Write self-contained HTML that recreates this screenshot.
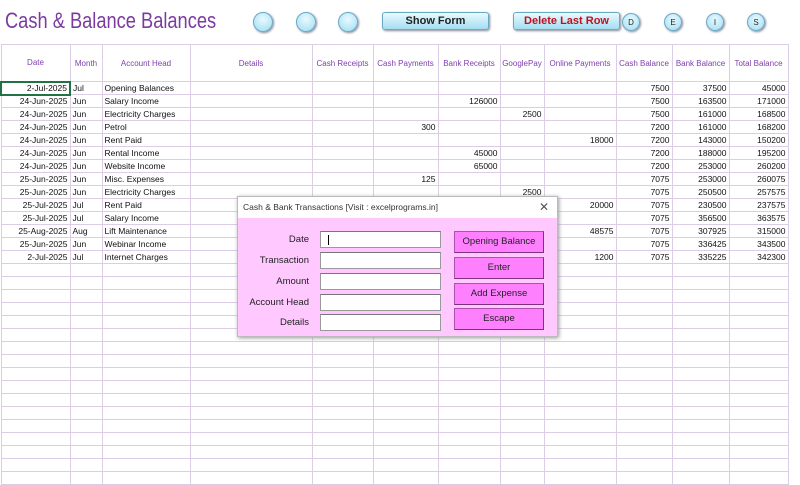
<!DOCTYPE html>
<html><head><meta charset="utf-8"><style>
*{margin:0;padding:0;box-sizing:border-box}
body{width:800px;height:450px;overflow:hidden;background:#fff;font-family:"Liberation Sans",sans-serif;position:relative}
.title{position:absolute;left:5px;top:8px;font-size:22px;color:#7b3aa0;transform:scaleX(0.83);transform-origin:0 0;white-space:nowrap}
.circ{position:absolute;border-radius:50%;background:radial-gradient(circle at 50% 35%,#e8faff,#9fdcf2);border:1px solid #6aa9c4;box-shadow:1px 1px 2px #889}
.cl{font-size:8px;color:#222;text-align:center;line-height:17px;width:18px;height:18px}
.btn{position:absolute;height:18px;border:1px solid #6aa9c4;border-radius:3px;background:linear-gradient(#e8faff,#a5def2);font-size:11px;text-align:center;line-height:16px;font-weight:bold;box-shadow:1px 1px 2px #889}
table{position:absolute;left:0;top:44px;width:787px;border-collapse:collapse;table-layout:fixed;font-size:8.5px}
td{border:1px solid #dccde6;height:13px;padding:0 2px;white-space:nowrap;overflow:hidden;text-align:right;color:#111;line-height:11px}
tr.h td{height:37px;text-align:center;color:#8040b0;font-size:8px;padding:0}
td.l{text-align:left}
.dlg{position:absolute;left:237px;top:196px;width:321px;height:141px;background:#ffc8ff;border:1px solid #bbb;box-shadow:1px 1px 4px #999}
.tb{height:21px;background:#fff;font-size:8.5px;color:#333;line-height:21px;padding-left:5px}
.x{position:absolute;right:8px;top:0;font-size:12px;color:#555}
.lab{position:absolute;right:248px;font-size:9.5px;color:#222;width:80px;text-align:right}
.inp{position:absolute;left:82px;width:121px;height:17px;background:#fff;border:1px solid #999;border-top-color:#777}
.pb{position:absolute;left:216px;width:90px;height:22px;background:#ff80ff;border:1px solid #b050b0;border-right-color:#803080;border-bottom-color:#803080;font-size:9.5px;color:#222;text-align:center;line-height:20px}
</style></head><body>
<div class="title">Cash &amp; Balance Balances</div>
<div class="circ" style="left:253px;top:12px;width:20px;height:20px"></div>
<div class="circ" style="left:296px;top:12px;width:20px;height:20px"></div>
<div class="circ" style="left:338px;top:12px;width:20px;height:20px"></div>
<div class="btn" style="left:382px;top:12px;width:107px;color:#222">Show Form</div>
<div class="btn" style="left:513px;top:12px;width:107px;color:#c01020">Delete Last Row</div>
<div class="circ cl" style="left:622px;top:13px">D</div>
<div class="circ cl" style="left:664px;top:13px">E</div>
<div class="circ cl" style="left:706px;top:13px">I</div>
<div class="circ cl" style="left:747px;top:13px">S</div>
<table>
<colgroup><col style="width:69px"><col style="width:32px"><col style="width:88px"><col style="width:122px"><col style="width:61px"><col style="width:65px"><col style="width:62px"><col style="width:44px"><col style="width:72px"><col style="width:56px"><col style="width:57px"><col style="width:59px"></colgroup>
<tr class="h"><td>Date</td><td>Month</td><td>Account Head</td><td>Details</td><td>Cash Receipts</td><td>Cash Payments</td><td>Bank Receipts</td><td>GooglePay</td><td>Online Payments</td><td>Cash Balance</td><td>Bank Balance</td><td>Total Balance</td></tr>
<tr><td style="border:2px solid #217346">2-Jul-2025</td><td class="l">Jul</td><td class="l">Opening Balances</td><td></td><td></td><td></td><td></td><td></td><td></td><td>7500</td><td>37500</td><td>45000</td></tr>
<tr><td>24-Jun-2025</td><td class="l">Jun</td><td class="l">Salary Income</td><td></td><td></td><td></td><td>126000</td><td></td><td></td><td>7500</td><td>163500</td><td>171000</td></tr>
<tr><td>24-Jun-2025</td><td class="l">Jun</td><td class="l">Electricity Charges</td><td></td><td></td><td></td><td></td><td>2500</td><td></td><td>7500</td><td>161000</td><td>168500</td></tr>
<tr><td>24-Jun-2025</td><td class="l">Jun</td><td class="l">Petrol</td><td></td><td></td><td>300</td><td></td><td></td><td></td><td>7200</td><td>161000</td><td>168200</td></tr>
<tr><td>24-Jun-2025</td><td class="l">Jun</td><td class="l">Rent Paid</td><td></td><td></td><td></td><td></td><td></td><td>18000</td><td>7200</td><td>143000</td><td>150200</td></tr>
<tr><td>24-Jun-2025</td><td class="l">Jun</td><td class="l">Rental Income</td><td></td><td></td><td></td><td>45000</td><td></td><td></td><td>7200</td><td>188000</td><td>195200</td></tr>
<tr><td>24-Jun-2025</td><td class="l">Jun</td><td class="l">Website Income</td><td></td><td></td><td></td><td>65000</td><td></td><td></td><td>7200</td><td>253000</td><td>260200</td></tr>
<tr><td>25-Jun-2025</td><td class="l">Jun</td><td class="l">Misc. Expenses</td><td></td><td></td><td>125</td><td></td><td></td><td></td><td>7075</td><td>253000</td><td>260075</td></tr>
<tr><td>25-Jun-2025</td><td class="l">Jun</td><td class="l">Electricity Charges</td><td></td><td></td><td></td><td></td><td>2500</td><td></td><td>7075</td><td>250500</td><td>257575</td></tr>
<tr><td>25-Jul-2025</td><td class="l">Jul</td><td class="l">Rent Paid</td><td></td><td></td><td></td><td></td><td></td><td>20000</td><td>7075</td><td>230500</td><td>237575</td></tr>
<tr><td>25-Jul-2025</td><td class="l">Jul</td><td class="l">Salary Income</td><td></td><td></td><td></td><td></td><td></td><td></td><td>7075</td><td>356500</td><td>363575</td></tr>
<tr><td>25-Aug-2025</td><td class="l">Aug</td><td class="l">Lift Maintenance</td><td></td><td></td><td></td><td></td><td></td><td>48575</td><td>7075</td><td>307925</td><td>315000</td></tr>
<tr><td>25-Jun-2025</td><td class="l">Jun</td><td class="l">Webinar Income</td><td></td><td></td><td></td><td></td><td></td><td></td><td>7075</td><td>336425</td><td>343500</td></tr>
<tr><td>2-Jul-2025</td><td class="l">Jul</td><td class="l">Internet Charges</td><td></td><td></td><td></td><td></td><td></td><td>1200</td><td>7075</td><td>335225</td><td>342300</td></tr>
<tr><td></td><td></td><td></td><td></td><td></td><td></td><td></td><td></td><td></td><td></td><td></td><td></td></tr>
<tr><td></td><td></td><td></td><td></td><td></td><td></td><td></td><td></td><td></td><td></td><td></td><td></td></tr>
<tr><td></td><td></td><td></td><td></td><td></td><td></td><td></td><td></td><td></td><td></td><td></td><td></td></tr>
<tr><td></td><td></td><td></td><td></td><td></td><td></td><td></td><td></td><td></td><td></td><td></td><td></td></tr>
<tr><td></td><td></td><td></td><td></td><td></td><td></td><td></td><td></td><td></td><td></td><td></td><td></td></tr>
<tr><td></td><td></td><td></td><td></td><td></td><td></td><td></td><td></td><td></td><td></td><td></td><td></td></tr>
<tr><td></td><td></td><td></td><td></td><td></td><td></td><td></td><td></td><td></td><td></td><td></td><td></td></tr>
<tr><td></td><td></td><td></td><td></td><td></td><td></td><td></td><td></td><td></td><td></td><td></td><td></td></tr>
<tr><td></td><td></td><td></td><td></td><td></td><td></td><td></td><td></td><td></td><td></td><td></td><td></td></tr>
<tr><td></td><td></td><td></td><td></td><td></td><td></td><td></td><td></td><td></td><td></td><td></td><td></td></tr>
<tr><td></td><td></td><td></td><td></td><td></td><td></td><td></td><td></td><td></td><td></td><td></td><td></td></tr>
<tr><td></td><td></td><td></td><td></td><td></td><td></td><td></td><td></td><td></td><td></td><td></td><td></td></tr>
<tr><td></td><td></td><td></td><td></td><td></td><td></td><td></td><td></td><td></td><td></td><td></td><td></td></tr>
<tr><td></td><td></td><td></td><td></td><td></td><td></td><td></td><td></td><td></td><td></td><td></td><td></td></tr>
<tr><td></td><td></td><td></td><td></td><td></td><td></td><td></td><td></td><td></td><td></td><td></td><td></td></tr>
<tr><td></td><td></td><td></td><td></td><td></td><td></td><td></td><td></td><td></td><td></td><td></td><td></td></tr>
<tr><td></td><td></td><td></td><td></td><td></td><td></td><td></td><td></td><td></td><td></td><td></td><td></td></tr>
</table>
<div class="dlg">
<div class="tb">Cash &amp; Bank Transactions [Visit : excelprograms.in]<span class="x">✕</span></div>
<div class="lab" style="top:37px">Date</div><div class="inp" style="top:34px"><span style="position:absolute;left:7px;top:3px;width:1px;height:10px;background:#000"></span></div>
<div class="lab" style="top:58px">Transaction</div><div class="inp" style="top:55px"></div>
<div class="lab" style="top:79px">Amount</div><div class="inp" style="top:76px"></div>
<div class="lab" style="top:100px">Account Head</div><div class="inp" style="top:97px"></div>
<div class="lab" style="top:120px">Details</div><div class="inp" style="top:117px"></div>
<div class="pb" style="top:34px">Opening Balance</div>
<div class="pb" style="top:60px">Enter</div>
<div class="pb" style="top:86px">Add Expense</div>
<div class="pb" style="top:111px">Escape</div>
</div>
</body></html>
